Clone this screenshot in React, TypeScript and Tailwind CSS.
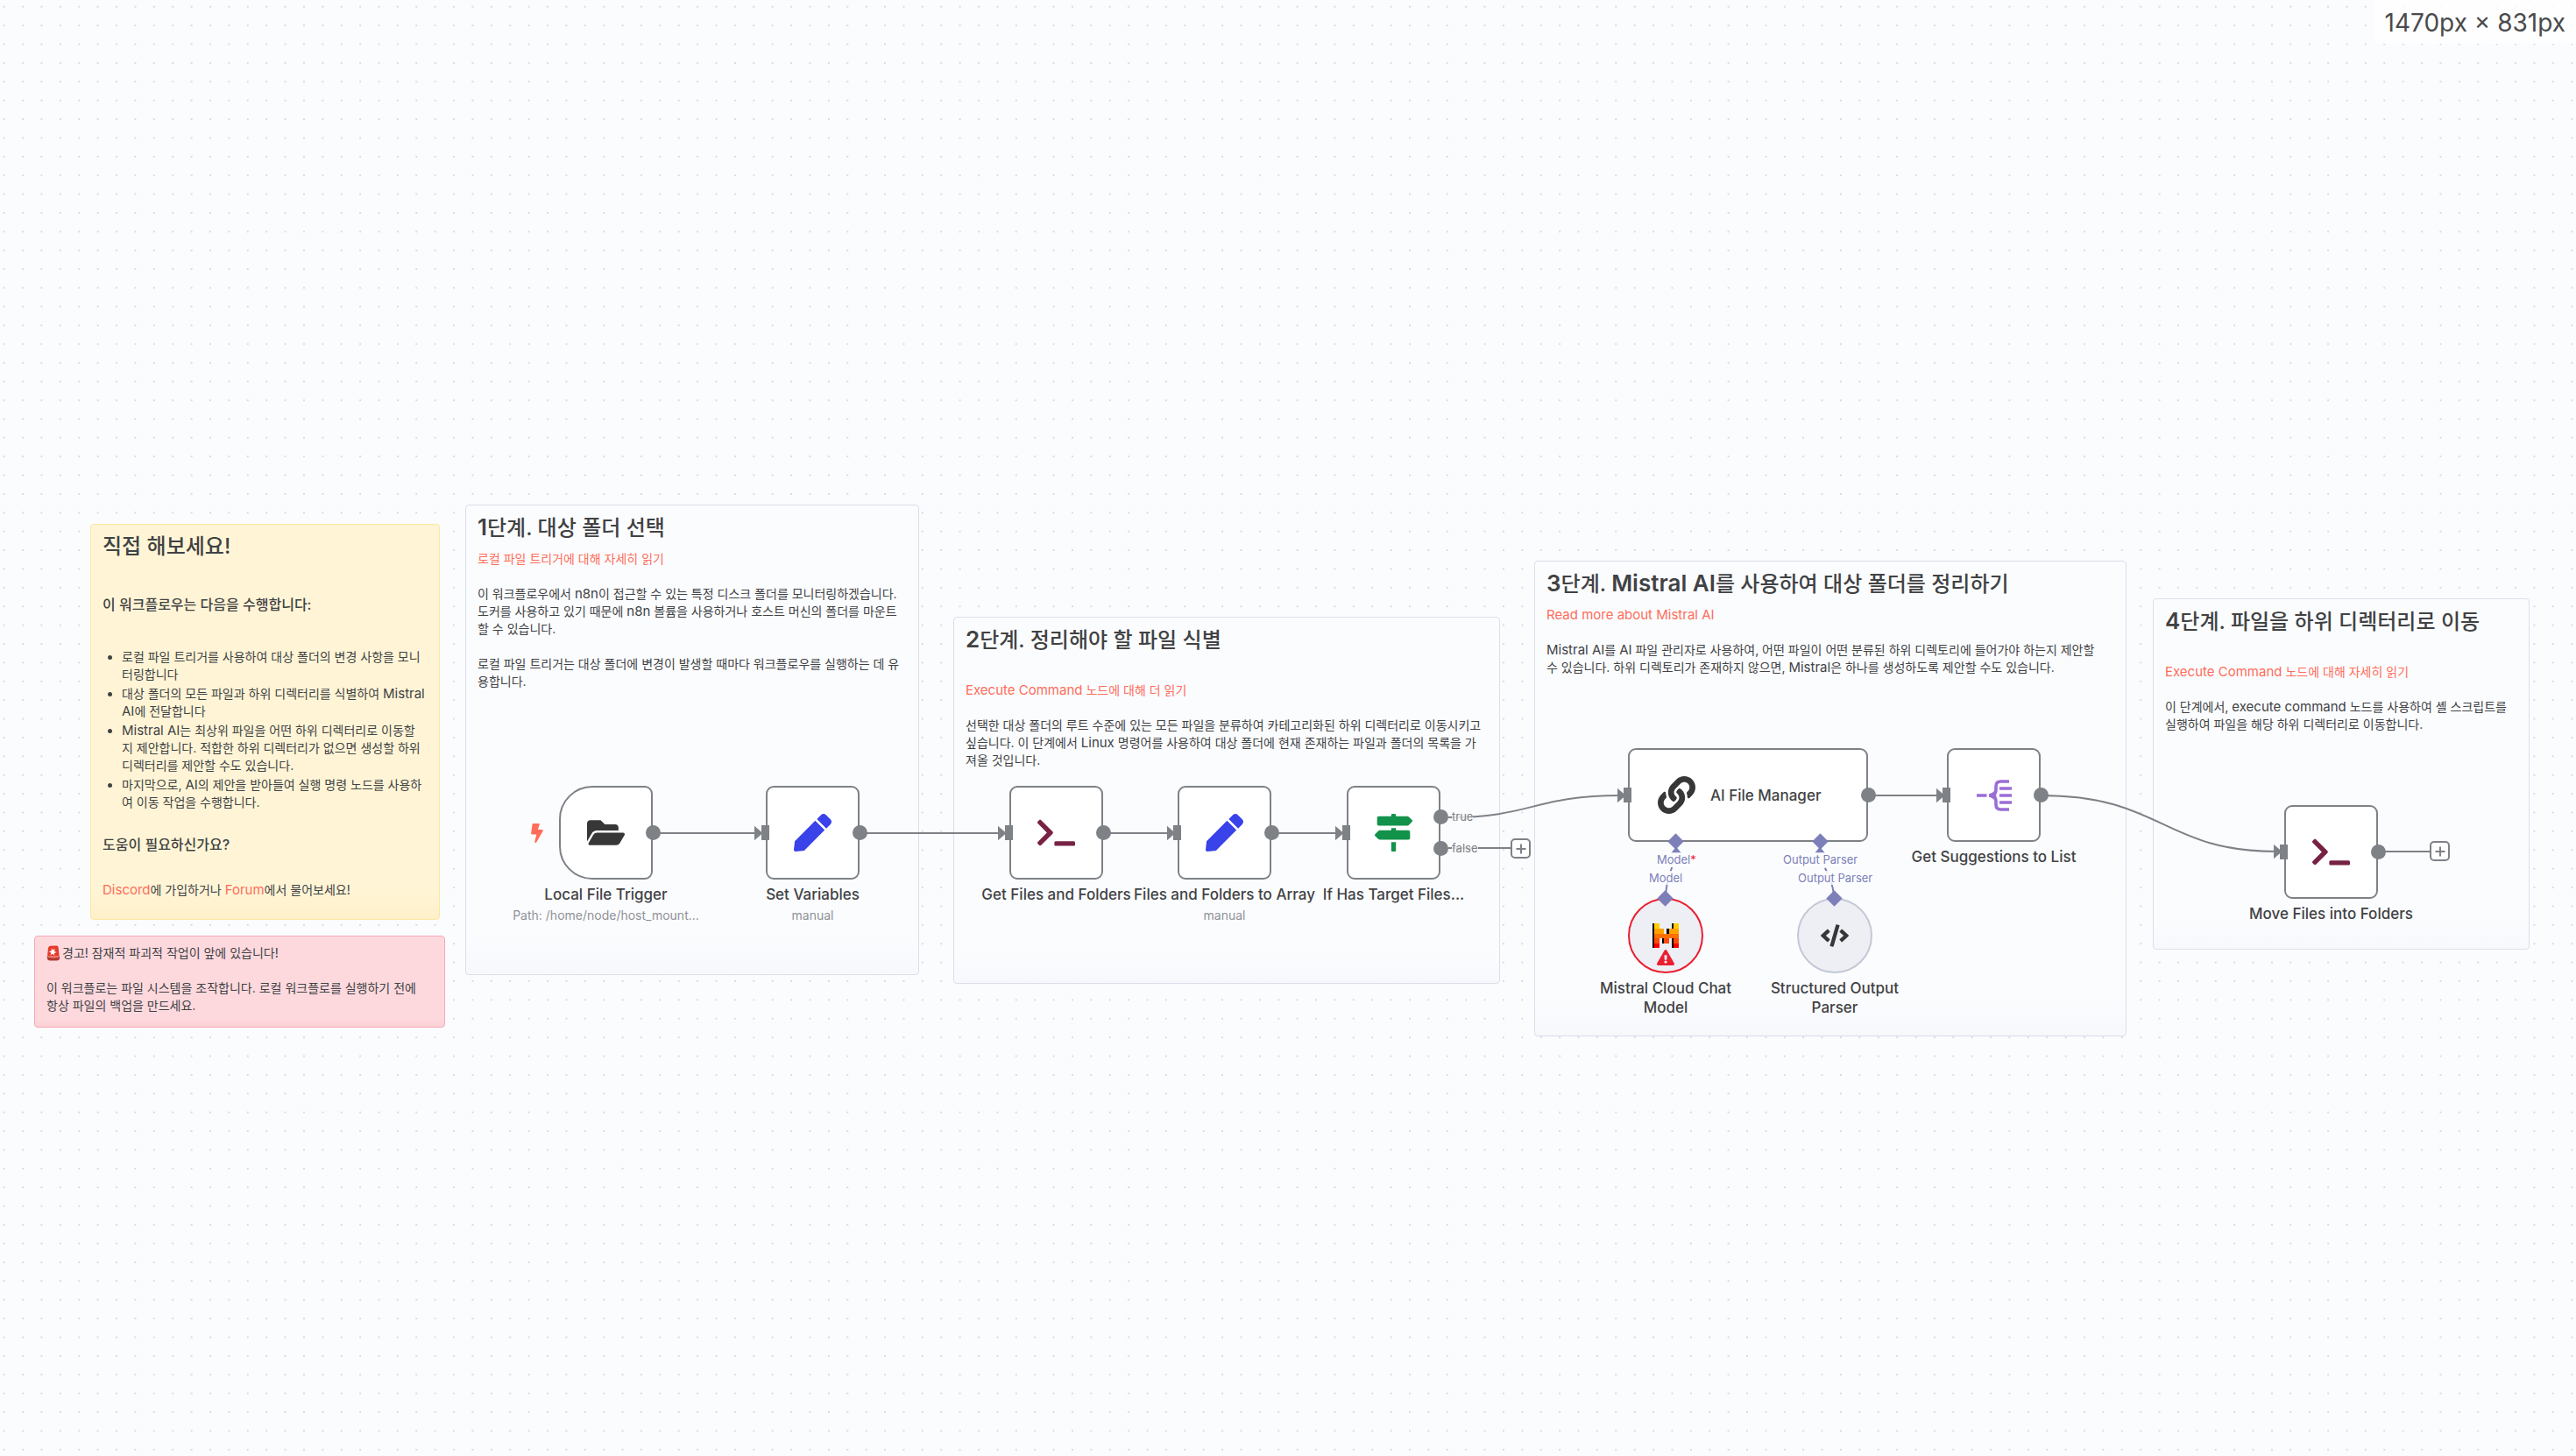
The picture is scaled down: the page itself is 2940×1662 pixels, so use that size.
import type { ReactNode } from 'react'
import { FaBolt, FaCode, FaExclamationTriangle, FaFolderOpen, FaLink, FaMapSigns, FaPen, FaTerminal } from 'react-icons/fa'

type Tone = 'plain' | 'yellow' | 'red'

const tones: Record<Tone, string> = {
  plain: 'border-[#dcdeea] from-[#fbfcfe] to-[#f7f8fc]',
  yellow: 'border-[#fde6a1] from-[#fff5d6] to-[#fff0cb]',
  red: 'border-[#f6a9b1] from-[#fdd9de] to-[#fbd0d5]',
}

// Hangul glyphs are wider than the Latin ones, so Latin runs are set one step larger.
function Mixed({ children, latin = 'text-[15px]' }: { children: string; latin?: string }) {
  return (
    <>
      {children.split(/([A-Za-z0-9]+(?: [A-Za-z0-9]+)*)/).map((part, i) =>
        i % 2 ? (
          <span key={i} lang="en" className={latin}>
            {part}
          </span>
        ) : (
          part
        ),
      )}
    </>
  )
}

function Lines({ lines }: { lines: string[] }) {
  return (
    <p>
      {lines.map((l) => (
        <span key={l} className="block">
          <Mixed>{l}</Mixed>
        </span>
      ))}
    </p>
  )
}

function Link({ children }: { children: string }) {
  return (
    <a href="#" className="text-[#ff6d5a]">
      <Mixed>{children}</Mixed>
    </a>
  )
}

function Sticky({ place, tone = 'plain', children }: { place: string; tone?: Tone; children: ReactNode }) {
  return (
    <section
      className={`absolute rounded border bg-linear-to-b from-92% px-[13px] pt-[9px] text-sm leading-5 whitespace-nowrap text-[#414244] ${tones[tone]} ${place}`}
    >
      {children}
    </section>
  )
}

function Title({ children }: { children: string }) {
  return (
    <h1 className="text-2xl leading-[31px] font-medium">
      <Mixed latin="text-[26px] font-semibold">{children}</Mixed>
    </h1>
  )
}

function InPort() {
  return <span className="absolute top-[43px] -left-[7px] h-[17px] w-[9px] bg-[#7e8186]" />
}

function OutPort({ className = 'top-[43px]' }: { className?: string }) {
  return <span className={`absolute -right-[11px] size-[17px] rounded-full bg-[#7e8186] ${className}`} />
}

function Diamond({ className }: { className: string }) {
  return <span className={`absolute size-[13px] rotate-45 bg-[#7d7fb9] ${className}`} />
}

function Label({ children, note }: { children: ReactNode; note?: string }) {
  return (
    <div className="absolute top-full left-1/2 mt-2 w-max -translate-x-1/2 text-center">
      <div className="text-[17px] leading-[22px] font-medium text-[#414244]">{children}</div>
      {note && <div className="mt-[3px] text-sm leading-5 text-[#909298]">{note}</div>}
    </div>
  )
}

function Node({
  place,
  shape = 'rounded-[9px]',
  icon,
  name,
  note,
  children,
}: {
  place: string
  shape?: string
  icon: ReactNode
  name: string
  note?: string
  children?: ReactNode
}) {
  return (
    <article className={`absolute size-[107px] border-2 border-[#7e8186] bg-white ${shape} ${place}`}>
      <div className="grid size-full place-items-center">{icon}</div>
      {children}
      <Label note={note}>{name}</Label>
    </article>
  )
}

function SubNode({ place, border, icon, children, name }: { place: string; border: string; icon: ReactNode; children?: ReactNode; name: ReactNode }) {
  return (
    <article className={`absolute size-[86px] rounded-full border-2 bg-[#eeeff5] ${border} ${place}`}>
      <div className="grid size-full place-items-center">{icon}</div>
      {children}
      <Diamond className="-top-[8px] left-[34px]" />
      <Label>{name}</Label>
    </article>
  )
}

function PlusButton({ place }: { place: string }) {
  return (
    <button
      type="button"
      aria-label="Add node"
      className={`absolute grid size-[23px] place-items-center rounded-[5px] border-2 border-[#7e8186] bg-white ${place}`}
    >
      <svg viewBox="0 0 12 12" className="size-3 stroke-[#7e8186] stroke-2">
        <path d="M6 0.5v11M0.5 6h11" />
      </svg>
    </button>
  )
}

function SplitOutIcon() {
  return (
    <svg viewBox="0 0 40 38" className="h-[38px] w-10 fill-none stroke-[#9b6dd7] stroke-[3.6]">
      <path d="M0 19h11.500M26 11h14M26 19h14M26 27h14M37 3h-9.500q-5.500 0-5.500 5.500v4q0 3.500-2.500 5q-2 1-5 1.500q3 .5 5 1.500q2.500 1.500 2.500 5v4q0 5.500 5.500 5.500h9.500" />
      <path d="M14.500 19q4-1 6-3v6q-2-2-6-3z" />
    </svg>
  )
}

function MistralIcon() {
  return (
    <svg viewBox="0 0 30 28" className="h-7 w-[30px]" shapeRendering="crispEdges">
      <path d="M0 0h2v28h-2zM22 0h2v6h-2zM16 6h3v6h-3zM11 17h2v6h-2zM22 17h2v11h-2z" fill="#000" />
      <path d="M2 0h6v6h-6zM24 0h6v6h-6z" fill="#ffcd00" />
      <path d="M2 6h11v6h-11zM19 6h11v6h-11z" fill="#ffa200" />
      <path d="M2 12h28v5h-28z" fill="#ff6e00" />
      <path d="M2 17h6v6h-6zM13 17h6v6h-6zM24 17h6v6h-6z" fill="#ff4a09" />
      <path d="M2 23h6v5h-6zM24 23h6v5h-6z" fill="#fe0000" />
    </svg>
  )
}

function SirenIcon() {
  return (
    <svg viewBox="0 0 16 18" className="h-[18px] w-4">
      <path d="M2 3q.3-2 2.300-2.200l7-.3q2 0 2.300 2l1 10h-13.600z" fill="#e8392b" />
      <path d="M.8 12.500h14.400v1.500q-.2 3.500-3.200 3.500h-8q-3 0-3.200-3.500z" fill="#b23a33" />
      <path d="M1.500 12h13v1.500q-6.500 2-13 0z" fill="#f07a6c" />
      <path d="M6 3l1 2.500 3-1.500-1.200 3 3 1-3 1 .5 2.500-2.300-1.700-2.500 1.500.8-2.800-2.600-1.200 2.800-.8z" fill="#fff" />
    </svg>
  )
}

function Wires() {
  return (
    <svg className="absolute inset-0 size-full" fill="none" stroke="#7e8186" strokeWidth="2">
      <path d="M745 951H864M980 951H1143M1259 951H1335M1451 951H1528M2132 908H2214" />
      <path d="M1653 933C1750 933 1750 908 1850 908M1653 968H1726M2329 908C2468 908 2468 972 2599 972M2714 972H2774" />
      <path d="M862 945l7 6-7 6zM1140 945l7 6-7 6zM1333 945l7 6-7 6zM1525 945l7 6-7 6zM1847 902l7 6-7 6zM2211 902l7 6-7 6zM2596 966l7 6-7 6z" fill="#7e8186" />
      <g stroke="#7d7fb9">
        <path d="M1901 1026C1901 1000 1912 990 1912 966M2093 1026C2093 1000 2077 990 2077 966" strokeDasharray="19 12 6 100" />
        <path d="M1909 973l4-5 4 5zM2073 973l4-5 4 5z" fill="#7d7fb9" />
      </g>
    </svg>
  )
}

function PortName({ place, children }: { place: string; children: ReactNode }) {
  return <span className={`absolute bg-[#fbfcfe]/80 text-[13px] leading-4 whitespace-nowrap ${place}`}>{children}</span>
}

export default function App() {
  return (
    <main className="relative min-h-screen w-full overflow-hidden bg-[#fbfcfe] bg-[radial-gradient(circle_at_center,#c4c6cd_0.5px,transparent_1px)] bg-[length:21.4px_21.4px] bg-[position:-6px_-3px] font-[Inter,'Noto_Sans_CJK_KR',sans-serif]">
      <div className="absolute top-0 right-0 bg-white/80 px-3 pt-[9px] pb-[7px] text-[28px] leading-[34px] text-[#4a4a4c]">1470px × 831px</div>

      <Sticky tone="yellow" place="left-[103px] top-[598px] w-[399px] h-[452px]">
        <Title>직접 해보세요!</Title>
        <h2 className="mt-[41px] text-base leading-5 font-medium">이 워크플로우는 다음을 수행합니다:</h2>
        <ul className="mt-10 flex list-disc flex-col gap-0.5 pl-[22px]">
          <li><Lines lines={['로컬 파일 트리거를 사용하여 대상 폴더의 변경 사항을 모니', '터링합니다']} /></li>
          <li><Lines lines={['대상 폴더의 모든 파일과 하위 디렉터리를 식별하여 Mistral', 'AI에 전달합니다']} /></li>
          <li><Lines lines={['Mistral AI는 최상위 파일을 어떤 하위 디렉터리로 이동할', '지 제안합니다. 적합한 하위 디렉터리가 없으면 생성할 하위', '디렉터리를 제안할 수도 있습니다.']} /></li>
          <li><Lines lines={['마지막으로, AI의 제안을 받아들여 실행 명령 노드를 사용하', '여 이동 작업을 수행합니다.']} /></li>
        </ul>
        <h2 className="mt-7 text-base leading-5 font-medium">도움이 필요하신가요?</h2>
        <p className="mt-8">
          <Link>Discord</Link>에 가입하거나 <Link>Forum</Link>에서 물어보세요!
        </p>
      </Sticky>

      <Sticky tone="red" place="left-[39px] top-[1068px] w-[469px] h-[105px]">
        <p className="flex items-center gap-0.5"><SirenIcon />경고! 잠재적 파괴적 작업이 앞에 있습니다!</p>
        <div className="mt-5">
          <Lines lines={['이 워크플로는 파일 시스템을 조작합니다. 로컬 워크플로를 실행하기 전에', '항상 파일의 백업을 만드세요.']} />
        </div>
      </Sticky>

      <Sticky place="left-[531px] top-[576px] w-[518px] h-[537px]">
        <Title>1단계. 대상 폴더 선택</Title>
        <p className="mt-2.5"><Link>로컬 파일 트리거에 대해 자세히 읽기</Link></p>
        <div className="mt-5 flex flex-col gap-5">
          <Lines lines={['이 워크플로우에서 n8n이 접근할 수 있는 특정 디스크 폴더를 모니터링하겠습니다.', '도커를 사용하고 있기 때문에 n8n 볼륨을 사용하거나 호스트 머신의 폴더를 마운트', '할 수 있습니다.']} />
          <Lines lines={['로컬 파일 트리거는 대상 폴더에 변경이 발생할 때마다 워크플로우를 실행하는 데 유', '용합니다.']} />
        </div>
      </Sticky>

      <Sticky place="left-[1088px] top-[704px] w-[624px] h-[419px]">
        <Title>2단계. 정리해야 할 파일 식별</Title>
        <p className="mt-8"><Link>Execute Command 노드에 대해 더 읽기</Link></p>
        <div className="mt-5">
          <Lines lines={['선택한 대상 폴더의 루트 수준에 있는 모든 파일을 분류하여 카테고리화된 하위 디렉터리로 이동시키고', '싶습니다. 이 단계에서 Linux 명령어를 사용하여 대상 폴더에 현재 존재하는 파일과 폴더의 목록을 가', '져올 것입니다.']} />
        </div>
      </Sticky>

      <Sticky place="left-[1751px] top-[640px] w-[676px] h-[543px]">
        <Title>3단계. Mistral AI를 사용하여 대상 폴더를 정리하기</Title>
        <p className="mt-2.5"><Link>Read more about Mistral AI</Link></p>
        <div className="mt-5">
          <Lines lines={['Mistral AI를 AI 파일 관리자로 사용하여, 어떤 파일이 어떤 분류된 하위 디렉토리에 들어가야 하는지 제안할', '수 있습니다. 하위 디렉토리가 존재하지 않으면, Mistral은 하나를 생성하도록 제안할 수도 있습니다.']} />
        </div>
      </Sticky>

      <Sticky place="left-[2457px] top-[683px] w-[430px] h-[401px]">
        <Title>4단계. 파일을 하위 디렉터리로 이동</Title>
        <p className="mt-8"><Link>Execute Command 노드에 대해 자세히 읽기</Link></p>
        <div className="mt-5">
          <Lines lines={['이 단계에서, execute command 노드를 사용하여 셸 스크립트를', '실행하여 파일을 해당 하위 디렉터리로 이동합니다.']} />
        </div>
      </Sticky>

      <Wires />

      <FaBolt className="absolute top-[940px] left-[602px] size-[22px] text-[#ff6d5a]" />
      <Node place="left-[638px] top-[897px]" shape="rounded-l-[38px] rounded-r-[9px]" icon={<FaFolderOpen className="size-[43px] text-[#373737]" />} name="Local File Trigger" note="Path: /home/node/host_mount...">
        <OutPort />
      </Node>
      <Node place="left-[874px] top-[897px]" icon={<FaPen className="size-[43px] text-[#3a42e9]" />} name="Set Variables" note="manual">
        <InPort />
        <OutPort />
      </Node>
      <Node place="left-[1152px] top-[897px]" icon={<FaTerminal className="size-[43px] text-[#772244]" />} name="Get Files and Folders">
        <InPort />
        <OutPort />
      </Node>
      <Node place="left-[1344px] top-[897px]" icon={<FaPen className="size-[43px] text-[#3a42e9]" />} name="Files and Folders to Array" note="manual">
        <InPort />
        <OutPort />
      </Node>
      <Node place="left-[1537px] top-[897px]" icon={<FaMapSigns className="size-[43px] text-[#12924b]" />} name="If Has Target Files...">
        <InPort />
        <OutPort className="top-[25px]" />
        <OutPort className="top-[61px]" />
        <PortName place="left-[118px] top-[25px] text-[#7e8186]">true</PortName>
        <PortName place="left-[118px] top-[61px] text-[#7e8186]">false</PortName>
      </Node>
      <PlusButton place="left-[1724px] top-[957px]" />

      <article className="absolute top-[854px] left-[1858px] flex h-[107px] w-[274px] items-center gap-[17px] rounded-[9px] border-2 border-[#7e8186] bg-white pl-8">
        <FaLink className="size-[43px] text-[#373737]" />
        <span className="text-[17px] leading-[22px] font-medium text-[#414244]">AI File Manager</span>
        <InPort />
        <OutPort />
        <Diamond className="top-[98px] left-[46px]" />
        <Diamond className="top-[98px] left-[211px]" />
        <PortName place="left-[31px] top-[117px] text-[#7d7fb9]">Model<span className="text-[#ea1f30]">*</span></PortName>
        <PortName place="left-[175px] top-[117px] text-[#7d7fb9]">Output Parser</PortName>
        <PortName place="left-[22px] top-[138px] text-[#7d7fb9]">Model</PortName>
        <PortName place="left-[192px] top-[138px] text-[#7d7fb9]">Output Parser</PortName>
      </article>

      <Node place="left-[2222px] top-[854px]" icon={<SplitOutIcon />} name="Get Suggestions to List">
        <InPort />
        <OutPort />
      </Node>
      <Node place="left-[2607px] top-[919px]" icon={<FaTerminal className="size-[43px] text-[#772244]" />} name="Move Files into Folders">
        <InPort />
        <OutPort />
      </Node>
      <PlusButton place="left-[2773px] top-[960px]" />

      <SubNode place="left-[1858px] top-[1025px]" border="border-[#ea1f30]" icon={<MistralIcon />} name={<>Mistral Cloud Chat<br />Model</>}>
        <FaExclamationTriangle className="absolute bottom-[6px] left-[31px] size-5 text-[#ea1f30]" />
      </SubNode>
      <SubNode place="left-[2051px] top-[1025px]" border="border-[#c3c9d5]" icon={<FaCode className="size-8 text-[#373737]" />} name={<>Structured Output<br />Parser</>} />
    </main>
  )
}
